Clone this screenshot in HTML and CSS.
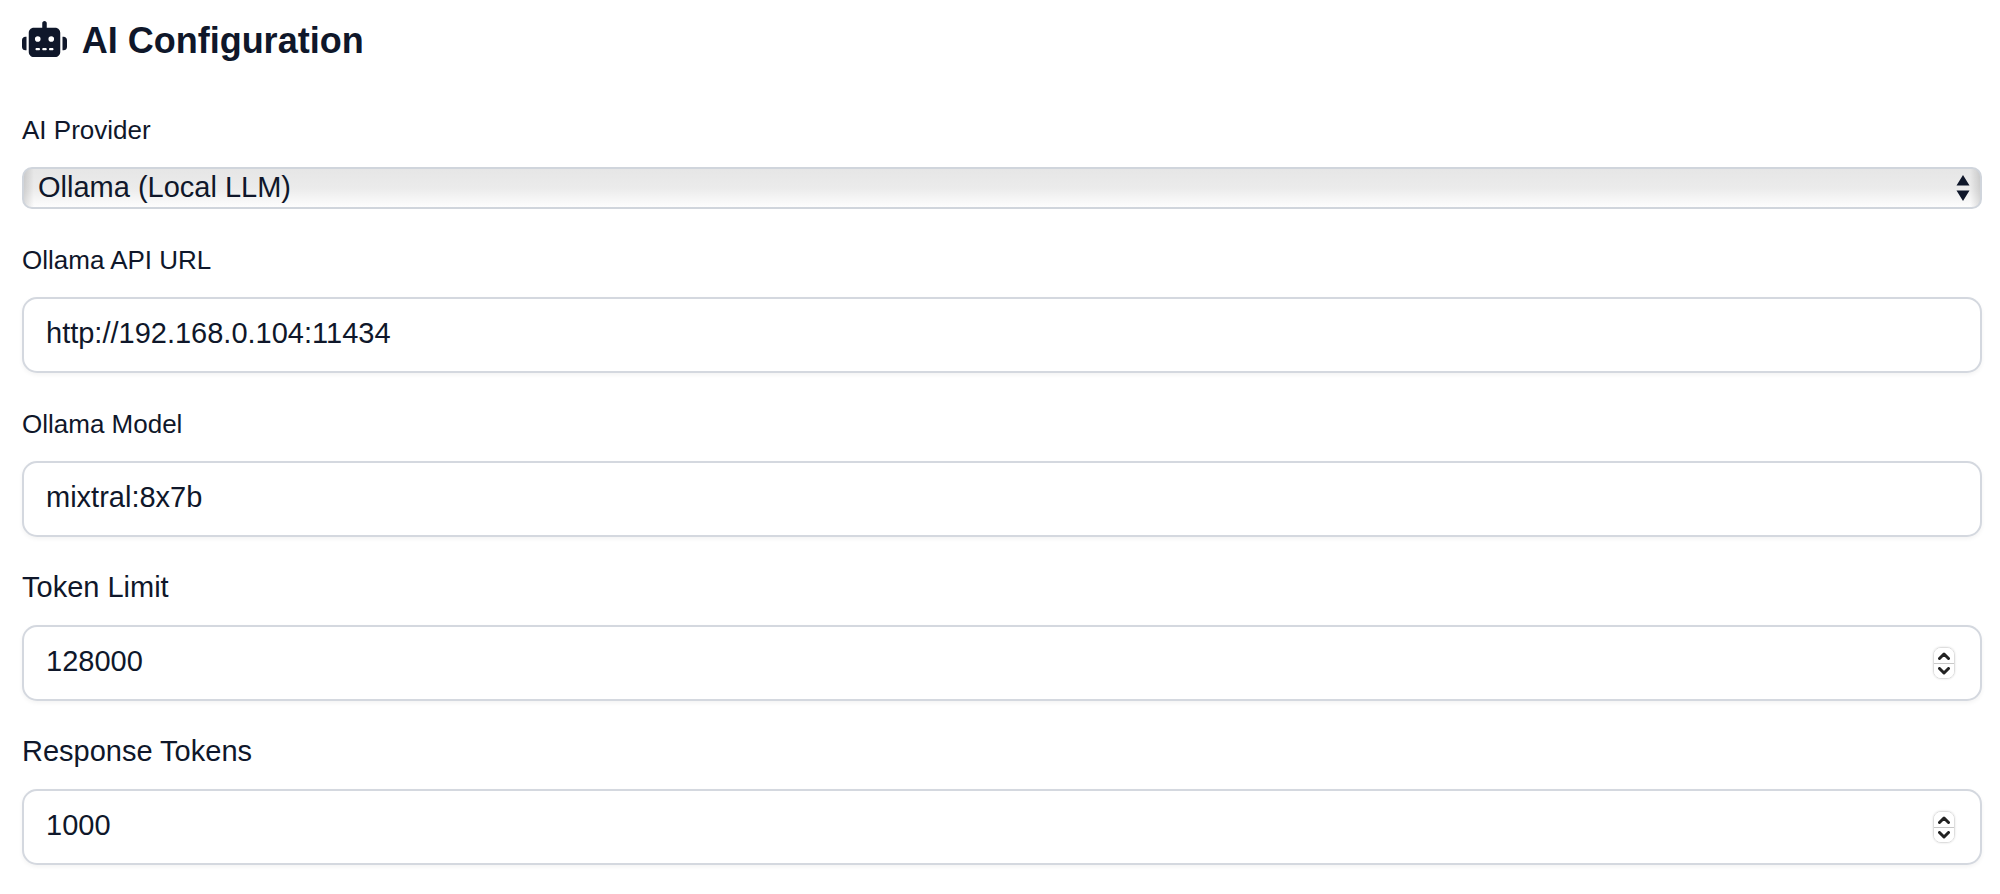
FILE: index.html
```html
<!DOCTYPE html>
<html lang="en">
  <head>
    <meta charset="UTF-8" />
    <meta name="viewport" content="width=device-width, initial-scale=1.0" />
    <title>AI Configuration</title>
    <link rel="stylesheet" href="styles.css" />
  </head>
  <body>
    <form class="settings">
      <h2 class="section-title">
        <svg class="icon-robot" viewBox="0 0 640 512" aria-hidden="true">
          <path d="M320 0c17.7 0 32 14.3 32 32V96H472c39.8 0 72 32.2 72 72V440c0 39.8-32.2 72-72 72H168c-39.8 0-72-32.2-72-72V168c0-39.8 32.2-72 72-72H288V32c0-17.7 14.3-32 32-32zM208 384c-8.8 0-16 7.2-16 16s7.2 16 16 16h32c8.8 0 16-7.2 16-16s-7.2-16-16-16H208zm96 0c-8.8 0-16 7.2-16 16s7.2 16 16 16h32c8.8 0 16-7.2 16-16s-7.2-16-16-16H304zm96 0c-8.8 0-16 7.2-16 16s7.2 16 16 16h32c8.8 0 16-7.2 16-16s-7.2-16-16-16H400zM264 256a40 40 0 1 0 -80 0 40 40 0 1 0 80 0zm152 40a40 40 0 1 0 0-80 40 40 0 1 0 0 80zM48 224H64V416H48c-26.5 0-48-21.5-48-48V272c0-26.5 21.5-48 48-48zm544 0c26.5 0 48 21.5 48 48v96c0 26.5-21.5 48-48 48H576V224h16z" />
        </svg>
        <span>AI Configuration</span>
      </h2>

      <div class="field">
        <div class="field-label">
          <label class="label-small" for="ai-provider">AI Provider</label>
        </div>
        <div class="select-wrap">
          <select class="select" id="ai-provider">
            <option value="openai">OpenAI</option>
            <option value="ollama" selected>Ollama (Local LLM)</option>
          </select>
          <svg class="select-arrows" viewBox="0 0 14 28" aria-hidden="true">
            <path d="M7 1 13.500 11.500H.5zM7 27 .5 16.500h13z" />
          </svg>
        </div>
      </div>

      <div class="field">
        <div class="field-label">
          <label class="label-small" for="ollama-url">Ollama API URL</label>
        </div>
        <div class="control">
          <input class="input" type="text" id="ollama-url" value="http://192.168.0.104:11434" />
        </div>
      </div>

      <div class="field">
        <div class="field-label">
          <label class="label-small" for="ollama-model">Ollama Model</label>
        </div>
        <div class="control">
          <input class="input" type="text" id="ollama-model" value="mixtral:8x7b" />
        </div>
      </div>

      <div class="field">
        <div class="field-label">
          <label for="token-limit">Token Limit</label>
        </div>
        <div class="control">
          <input class="input" type="number" id="token-limit" value="128000" />
          <div class="stepper">
            <button class="step" type="button" data-step="1" aria-label="Increase token limit">
              <svg class="chevron" viewBox="0 0 12 8" aria-hidden="true"><path d="M1.500 6.500 6 2l4.500 4.500" /></svg>
            </button>
            <button class="step" type="button" data-step="-1" aria-label="Decrease token limit">
              <svg class="chevron" viewBox="0 0 12 8" aria-hidden="true"><path d="M1.500 1.500 6 6l4.500-4.500" /></svg>
            </button>
          </div>
        </div>
      </div>

      <div class="field">
        <div class="field-label">
          <label for="response-tokens">Response Tokens</label>
        </div>
        <div class="control">
          <input class="input" type="number" id="response-tokens" value="1000" />
          <div class="stepper">
            <button class="step" type="button" data-step="1" aria-label="Increase response tokens">
              <svg class="chevron" viewBox="0 0 12 8" aria-hidden="true"><path d="M1.500 6.500 6 2l4.500 4.500" /></svg>
            </button>
            <button class="step" type="button" data-step="-1" aria-label="Decrease response tokens">
              <svg class="chevron" viewBox="0 0 12 8" aria-hidden="true"><path d="M1.500 1.500 6 6l4.500-4.500" /></svg>
            </button>
          </div>
        </div>
      </div>
    </form>

    <script>
      // Stepper buttons change the number input beside them
      document.querySelectorAll(".step").forEach(function (button) {
        button.addEventListener("click", function () {
          const input = button.closest(".control").querySelector("input");
          input.stepUp(Number(button.dataset.step));
        });
      });
    </script>
  </body>
</html>
```
FILE: styles.css
```css
* {
  box-sizing: border-box;
}

body {
  margin: 0;
  background-color: #fff;
  color: #0f172a;
  font-family: "Liberation Sans", Arial, Helvetica, sans-serif;
  font-size: 29px;
  line-height: 36px;
}

.settings {
  display: flex;
  flex-direction: column;
  gap: 32px;
  padding: 19px 18px 28px 22px;
}

.section-title {
  margin: 0 0 16px;
  font-size: 36px;
  font-weight: bold;
  line-height: 44px;
}

.icon-robot {
  width: 45px;
  height: 36px;
  margin-right: 6px;
  vertical-align: -4px;
  fill: currentColor;
}

.field {
  display: flex;
  flex-direction: column;
  gap: 20px;
}

.label-small {
  font-size: 26px;
  line-height: 30px;
}

.select-wrap {
  position: relative;
}

.select {
  display: block;
  width: 100%;
  height: 42px;
  padding: 0 40px 4px 14px;
  border: 2px solid #d0d5dc;
  border-radius: 10px;
  appearance: none;
  background: linear-gradient(to right, rgba(0, 0, 0, 0.12), transparent 10px),
    linear-gradient(to left, rgba(0, 0, 0, 0.12), transparent 10px),
    linear-gradient(#e6e6e6, #ebebeb 50%, #fdfdfd);
  color: inherit;
  font: inherit;
}

.select-arrows {
  position: absolute;
  top: 7px;
  right: 12px;
  width: 14px;
  height: 28px;
  fill: currentColor;
  pointer-events: none;
}

.control {
  display: flex;
  align-items: center;
  padding-right: 25px;
  border: 2px solid #d4d8df;
  border-radius: 15px;
  background-color: #fff;
  box-shadow: 0 2px 4px rgba(0, 0, 0, 0.05);
}

.input {
  flex: 1;
  min-width: 0;
  height: 72px;
  padding: 0 22px 3px;
  border: 0;
  outline: 0;
  background: transparent;
  color: inherit;
  font: inherit;
  appearance: textfield;
}

.input::-webkit-inner-spin-button {
  appearance: none;
  margin: 0;
}

.stepper {
  display: flex;
  flex-direction: column;
  width: 22px;
  border: 1px solid #dedede;
  border-radius: 8px;
  overflow: hidden;
  box-shadow: 0 0 2px rgba(0, 0, 0, 0.15);
}

.step {
  display: flex;
  align-items: center;
  justify-content: center;
  height: 15px;
  padding: 0;
  border: 0;
  background-color: #fff;
}

.step + .step {
  border-top: 1px solid #c8c8c8;
}

.chevron {
  width: 12px;
  height: 8px;
  fill: none;
  stroke: #222;
  stroke-width: 3;
  stroke-linecap: round;
  stroke-linejoin: round;
}
```
